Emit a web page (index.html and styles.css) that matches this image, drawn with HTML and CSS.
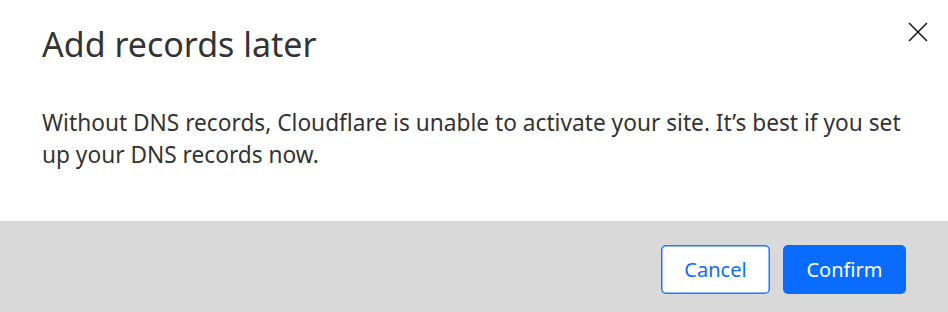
FILE: index.html
```html
<!DOCTYPE html>
<html>
<head>
<meta charset="utf-8">
<link rel="stylesheet" href="styles.css">
</head>
<body>
<div class="modal">
  <div class="content">
    <div class="header">
      <h1 class="title">Add records later</h1>
      <button class="close" aria-label="Close">
        <svg width="20" height="20" viewBox="0 0 20 20"><path d="M1 1 L19 19 M19 1 L1 19" stroke="#1d1d1d" stroke-width="1.6" fill="none"/></svg>
      </button>
    </div>
    <p class="text">Without DNS records, Cloudflare is unable to activate your site. It’s best if you set up your DNS records now.</p>
  </div>
  <div class="footer">
    <button class="btn btn-secondary">Cancel</button>
    <button class="btn btn-primary">Confirm</button>
  </div>
</div>
</body>
</html>
```
FILE: styles.css
```css
html, body { margin: 0; padding: 0; background: #fff; }
body { font-family: "Noto Sans", sans-serif; color: #313131; }
.modal { width: 948px; height: 312px; display: flex; flex-direction: column; }
.content { height: 221px; box-sizing: border-box; padding: 22px 20px 0 42px; }
.header { display: flex; justify-content: space-between; align-items: flex-start; }
.title { margin: 0; font-size: 34px; font-weight: 400; line-height: 44px; color: #333; }
.close { border: 0; background: none; padding: 0; margin: 0; width: 20px; height: 20px; margin-top: 0; cursor: pointer; }
.close svg { display: block; }
.text { margin: 41px 0 0 0; font-size: 22.7px; line-height: 32px; color: #333; width: 866px; }
.footer { flex: 1; background: #d9d9d9; display: flex; justify-content: flex-end; align-items: flex-start; gap: 13px; padding: 24px 42px 0 0; }
.btn { appearance: none; -webkit-appearance: none; font-family: inherit; font-size: 20px; height: 49px; box-sizing: border-box; border: none; border-radius: 5px; padding: 0; cursor: pointer; }
.btn-secondary { background: #fff; color: #0a6cff; box-shadow: inset 0 0 0 1.5px #1f78ff; width: 109px; }
.btn-primary { background: #0a6cff; color: #fff; width: 123px; }
```
